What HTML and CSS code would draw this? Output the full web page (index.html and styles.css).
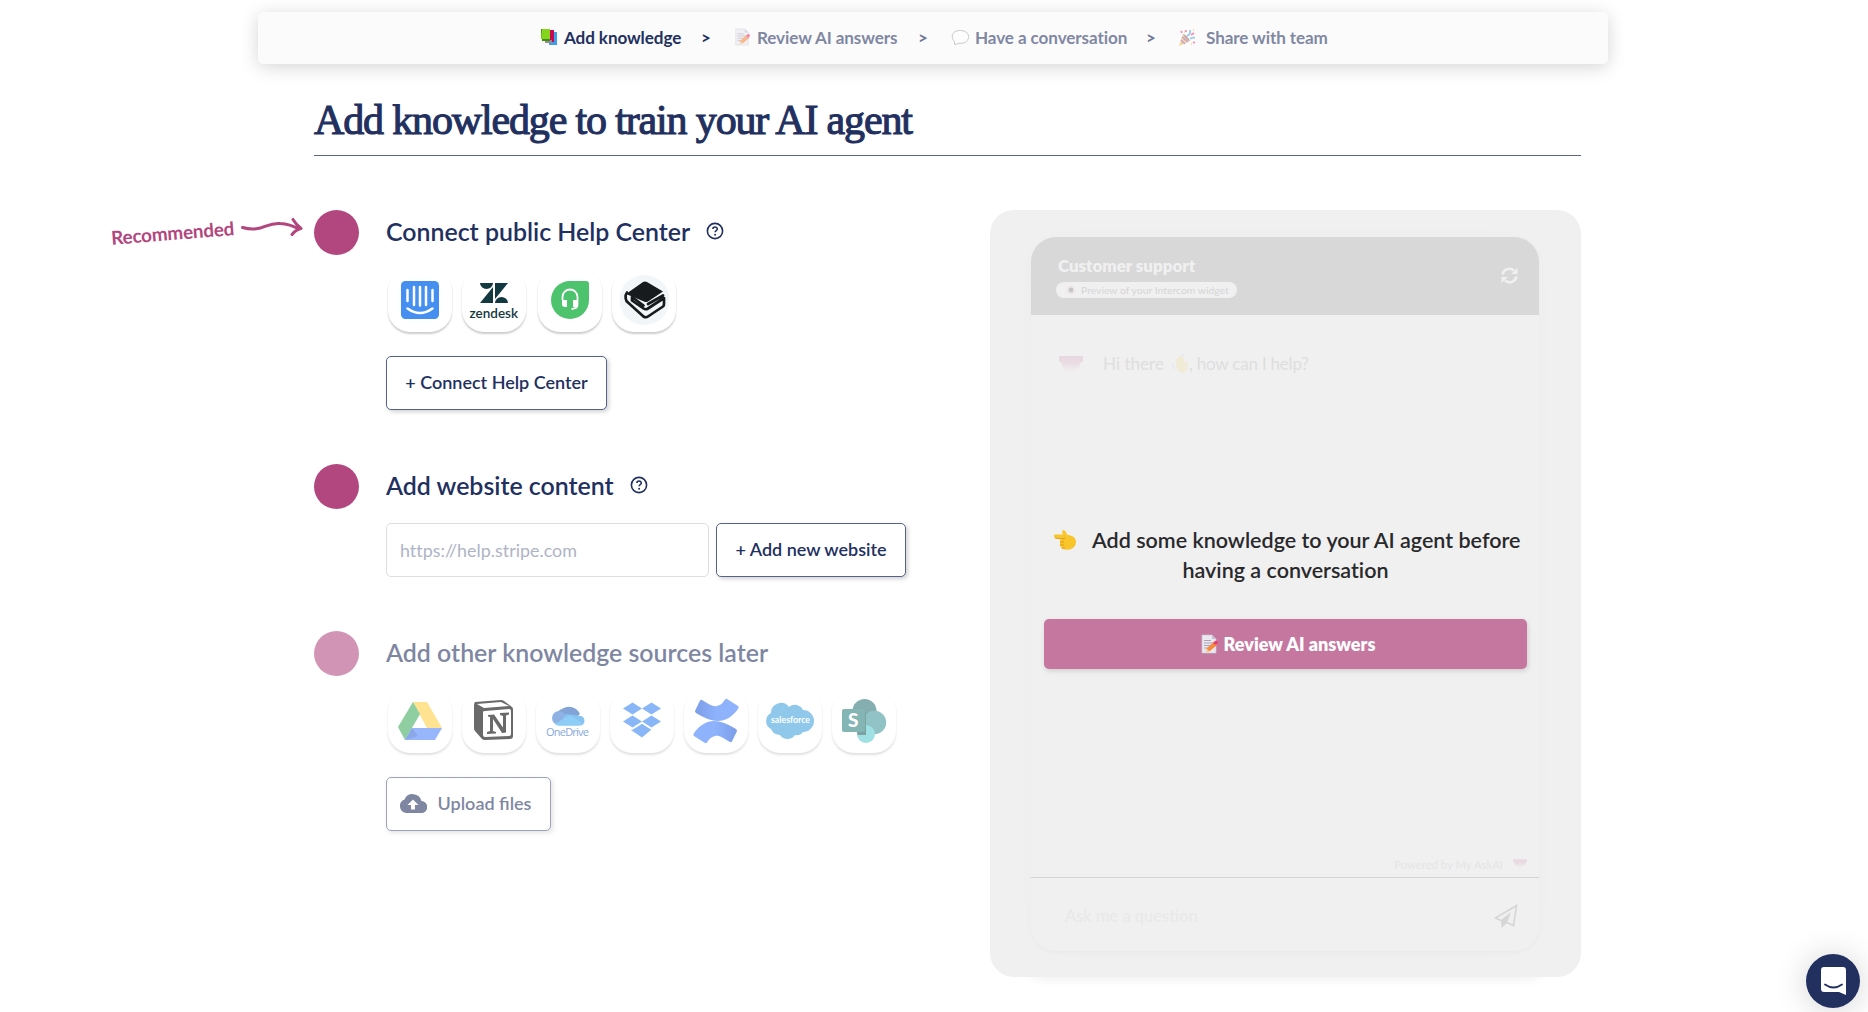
FILE: index.html
```html
<!DOCTYPE html>
<html lang="en">
<head>
<meta charset="utf-8">
<title>Add knowledge</title>
<link rel="stylesheet" href="styles.css">
</head>
<body>
<svg class="defs" width="0" height="0">
  <defs>
    <symbol id="memo" viewBox="0 0 17 20">
      <path d="M1 1h10l4 4v14H1z" fill="#ebe8f0" stroke="#c9c5d4" stroke-width=".7"/>
      <path d="M11 1v4h4z" fill="#c4bfd0"/>
      <path d="M3 6.500h7M3 9h9M3 11.500h7M3 14h4" stroke="#a9a4b8" stroke-width="1"/>
      <path d="M5 18l1-4 7-6 3 3-7 6z" fill="#f58a3c"/>
      <path d="M12 9l2-2q2-1 3 1 0 1-2 3z" fill="#ee3b6d"/>
      <path d="M5 18l1-3 2 2z" fill="#ffd9a8"/>
    </symbol>
    <symbol id="help" viewBox="0 0 18 18">
      <circle cx="9" cy="9" r="7.600" fill="none" stroke="#22305f" stroke-width="1.600"/>
      <path d="M6.900 7.100c0-2.700 4.400-2.700 4.400-.1 0 1.500-2.200 1.600-2.200 3.300" fill="none" stroke="#22305f" stroke-width="1.600"/>
      <circle cx="9.100" cy="12.700" r="1" fill="#22305f"/>
    </symbol>
    <linearGradient id="smile" x1="0" y1="0" x2="0" y2="1"><stop offset="0" stop-color="#e8d6df"/><stop offset=".45" stop-color="#eadde3"/><stop offset="1" stop-color="#f0f0f0"/></linearGradient>
  </defs>
</svg>

<nav class="steps">
  <div class="step step-current"><svg width="17" height="18" viewBox="0 0 17 18"><path d="M8 4h8v13H8z" fill="#3e9fe6"/><path d="M4 2h9v12H4z" fill="#c50a50"/><path d="M4 12h7v3H4z" fill="#9a8796"/><path d="M0 1h9v10H0z" fill="#86d51d"/><path d="M0 1h1v12h8v-2H1z" fill="#3e8e14"/></svg><span class="w1">Add knowledge</span></div>
  <span class="sep step-current">&gt;</span>
  <div class="step"><svg width="17" height="18"><use href="#memo"/></svg><span class="w2">Review AI answers</span></div>
  <span class="sep">&gt;</span>
  <div class="step"><svg width="18" height="17" viewBox="0 0 18 17"><path d="M3.500 12.500C-1 8 1.500 1.500 8.500 1.500h1c8 0 11 7.500 5 11.500-2 1.300-5 1.600-7 1.200Q5.500 15.500 3.500 15.500z" fill="#fff" stroke="#9a9a9a" stroke-width=".9"/></svg><span class="w3">Have a conversation</span></div>
  <span class="sep">&gt;</span>
  <div class="step step-share"><svg width="17" height="17" viewBox="0 0 17 17"><path d="M4 5l7 7-11 5z" fill="#f4b847"/><path d="M3 8l6 5M2 11l4 4" stroke="#8a5bd0" stroke-width="1.300"/><path d="M4 5q4 1 7 7-4 0-7-7" fill="#9b6b73"/><path d="M8 7q4-2 3-6M11 10q2-2 5-1" fill="none" stroke="#52a9ed" stroke-width="1.800"/><path d="M2 2l1 2M12 6l3-2M7 1v2M14 13l2 1" stroke="#eb3f8c" stroke-width="1.700"/><path d="M14 1h1M5 3h1M12 15h1" stroke="#f4b93c" stroke-width="1.500"/></svg><span class="w4">Share with team</span></div>
</nav>

<main>
  <h1><span>Add knowledge to train your AI agent</span></h1>
  <div class="columns">
    <div class="sources">
      <section class="source">
        <div class="recommended"><span>Recommended</span><svg width="62" height="22" viewBox="0 0 62 22"><path d="M1.500 9.500C21 15 25 4 39 5.500q10 .5 19 5.500M52 1.500q3 5 8 9-5 1-9 6" fill="none" stroke="#b2467e" stroke-width="3" stroke-linecap="round" stroke-linejoin="round"/></svg></div>
        <div class="dot"></div>
        <div class="content">
          <h2>Connect public Help Center <svg width="18" height="18"><use href="#help"/></svg></h2>
          <div class="tiles">
            <div class="tile"><svg viewBox="0 0 64 64"><rect x="13" y="13" width="38" height="38" rx="4.500" fill="#458ff0"/><path d="M19.500 22v11M26 19v18M32 19v18.500M38 19v18M44.500 22v11M19.500 40.500q12.500 9 25 0" fill="none" stroke="#fff" stroke-width="2.500" stroke-linecap="round"/></svg></div>
            <div class="tile"><svg viewBox="0 0 64 64"><g fill="#123840"><path d="M18 15h13a6.500 6 0 0 1-13 0zM31 19v16H18zM33 15h13L33 31zM33 35a6.500 6 0 0 1 13 0z"/></g><text x="7.500" y="49.500" textLength="48.500" lengthAdjust="spacingAndGlyphs" class="logo-text zendesk">zendesk</text></svg></div>
            <div class="tile tile-wide"><svg viewBox="0 0 64 64"><path d="M32 13h16q3 0 3 3v16a19 19 0 1 1-19-19" fill="#4cc36c"/><path d="M24.500 32v-3a7.500 7.500 0 0 1 15 0v8q0 3.500-6 4" fill="none" stroke="#fff" stroke-width="1.800"/><path d="M24 32h5v7h-2q-3 0-3-3zm11 0h5v4q0 3-3 3h-2z" fill="#fff"/></svg></div>
            <div class="tile"><svg viewBox="0 0 64 64"><circle cx="32.500" cy="32" r="25" fill="#f2f6f8"/><path d="M14 26l17-12q2-1 4 0l16 9.500L36 33.500q-2 1.200-4 0z" fill="#171b1e"/><path d="M15 24.500c-2.500 3-1.500 8.500 1 10l15.500 14q2.300 1.500 4.500 0l15-10q1-1 1-2.500v-6L36 40.500q-2.300 1.500-4.500 0L20 32.500V29l11.500 8.500M36 36l15-8.500" fill="none" stroke="#171b1e" stroke-width="2.700" stroke-linejoin="round" stroke-linecap="round"/></svg></div>
          </div>
          <button class="btn connect"><span>+ Connect Help Center</span></button>
        </div>
      </section>

      <section class="source">
        <div class="dot"></div>
        <div class="content">
          <h2>Add website content <svg width="18" height="18"><use href="#help"/></svg></h2>
          <div class="website"><input type="text" placeholder="https://help.stripe.com"><button class="btn add-site"><span>+ Add new website</span></button></div>
        </div>
      </section>

      <section class="source later">
        <div class="dot"></div>
        <div class="content">
          <h2>Add other knowledge sources later</h2>
          <div class="tiles">
            <div class="tile"><svg viewBox="0 0 64 64"><path d="M25 13h14l15 26H39z" fill="#ffd043"/><path d="M25 13l7 12-15 26-7-13z" fill="#3eab5d"/><path d="M24 39h30l-7 12H17z" fill="#4f82fa"/><path d="M24 39l6 8-13 4z" fill="#3769d9"/></svg></div>
            <div class="tile"><svg viewBox="0 0 64 64"><path d="M13 13l26-2q2 0 3 1l8 6q1 1 1 2v27q0 3-3 3l-25 1q-2 0-3-1l-7-8q-1-1-1-3V17q0-3 1-4z" fill="#000"/><path d="M15 15l24-2 8 4-25 2zM21 23q0-1 2-1l24-2q2 0 2 2v23q0 2-2 2l-24 1q-2 0-2-2z" fill="#fff"/><path d="M26 26l6-.5 9 13V27l-3-1v-2l9-.5v2l-3 1v17l-4 .5-9-14v12l3 1v1.500l-9 .5v-2l3-1V28l-2-.5z" fill="#000"/></svg></div>
            <div class="tile"><svg viewBox="0 0 64 64"><path d="M21 33a9 9 0 0 1 5-13 12 12 0 0 1 18 5l-12 10z" fill="#2861b7"/><circle cx="23" cy="29" r="7" fill="#3f7bd1"/><path d="M30 25q8 1 15 2a5 5 0 0 1 0 9.500H22z" fill="#3397e8"/><path d="M19 35l15-9 12 8q-1 2.500-4 2.500H23q-3 0-4-1.500z" fill="#3eaaf0"/><text x="10" y="46.800" textLength="43" class="logo-text onedrive">OneDrive</text></svg></div>
            <div class="tile"><svg viewBox="0 0 64 64"><path d="M22.500 13.500l9.500 6-9.500 6-9.500-6zM41.500 13.500l9.500 6-9.500 6-9.500-6zM22.500 26.500l9.500 6-9.500 6-9.500-6zM41.500 26.500l9.500 6-9.500 6-9.500-6zM32 34.500l9.500 6-9.500 8-11-7.500z" fill="#3483f1"/><path d="M21 39.500l1.500.8 9.500-6 9.500 6 1.500-.8" fill="none" stroke="#fff" stroke-width="1"/></svg></div>
            <div class="tile"><svg viewBox="0 0 64 64"><defs><linearGradient id="conf"><stop stop-color="#2058d8"/><stop offset=".5" stop-color="#3d7cfb"/></linearGradient></defs><path id="wave" d="M11 22l5-10.500q1-1 2-.5C25 15 29 18 33 17c4-1 6-3 8-6.500q1-1 2-.5l11 7q1 .5.500 2C49 28 41 32 34 32c-8 0-15-4-22-8q-1-1-1-2z" fill="url(#conf)"/><use href="#wave" transform="rotate(180 32 32)"/></svg></div>
            <div class="tile"><svg viewBox="0 0 64 64"><path transform="translate(-3 0)" d="M16 24a10 10 0 0 1 18-6 9 9 0 0 1 14 3 11 11 0 1 1 0 22q-3 4-8 3a9 9 0 0 1-15 0 10 10 0 0 1-9-6 9 9 0 0 1 0-16z" fill="#41a2e0"/><text x="13" y="33.500" textLength="39" lengthAdjust="spacingAndGlyphs" class="logo-text salesforce">salesforce</text></svg></div>
            <div class="tile"><svg viewBox="0 0 64 64"><circle cx="32.500" cy="22" r="12" fill="#2d7476"/><circle cx="42.500" cy="33.500" r="11.700" fill="#43999e"/><circle cx="34" cy="45" r="9" fill="#5acbd2"/><path d="M21 23h13v23H25.500z" fill="#235e60"/><rect x="10" y="20" width="23" height="23" rx="2" fill="#2c8080"/><text x="16" y="38" class="logo-text sharepoint">S</text></svg></div>
          </div>
          <button class="btn upload"><svg width="28" height="19" viewBox="0 0 28 19"><path fill-rule="evenodd" d="M7 19a7 7 0 0 1-1.500-13.500A9 9 0 0 1 22.500 7 6 6 0 0 1 22 19zM14 5.500L8.500 11H12v4.500h4V11h3.500z" fill="#22305f"/></svg><span>Upload files</span></button>
        </div>
      </section>
    </div>

    <aside class="preview">
      <div class="halo"></div>
      <div class="chat">
        <header>
          <div class="chat-title"><strong>Customer support</strong><div class="pill"><svg width="10" height="10" viewBox="0 0 10 10"><circle cx="5" cy="5" r="4.500" fill="#ece8ea"/><circle cx="5" cy="5" r="2.400" fill="#c5c5c5"/></svg><span>Preview of your Intercom widget</span></div></div>
          <svg width="17" height="17" viewBox="0 0 17 17"><path d="M1.500 7.500A7 7 0 0 1 13 3.500M15.500 9.500A7 7 0 0 1 4 13.500" fill="none" stroke="#f0f0f0" stroke-width="2.500"/><path d="M16.500 1v6H10zM.5 16v-6H7z" fill="#f0f0f0"/></svg>
        </header>
        <div class="messages">
          <div class="message"><svg width="24" height="18" viewBox="0 0 24 18"><path d="M1 0h22q1 0 1 1v5h-2q-2 10-10 10T2 6H0V1q0-1 1-1z" fill="url(#smile)"/></svg><span class="hi">Hi there</span><svg width="18" height="20" viewBox="0 0 18 20"><path d="M5 11L4.500 6.500q1.500-1 2.300.5L7 4q1.500-1.500 2.500 0l.5-1q1.500-1 2.300.5L13 6l.8 5L15 8.500q2-.5 2 1.500l-.5 5q-1 4.500-5 4.500-4 0-6-5z" fill="#f0ead6"/><path d="M1 11l3 5M10 1l4 1.500" stroke="#e6e7f0" stroke-width="1.500"/></svg><span class="greet">, how can I help?</span></div>
          <div class="powered"><span>Powered by My AskAI</span><svg width="14" height="10" viewBox="0 0 24 16"><path d="M0 0h24v5h-2q-2 10-10 10T2 5H0z" fill="url(#smile)"/></svg></div>
        </div>
        <footer><span>Ask me a question</span><svg width="24" height="24" viewBox="0 0 24 24"><path d="M1.500 14L22.500 1.500l-3 20-6.500-3-6-2z" fill="none" stroke="#d6d6d6" stroke-width="1.700"/><path d="M17 8l-4 11-5.500 5-.5-8z" fill="#d6d6d6"/></svg></footer>
      </div>
      <div class="prompt">
        <p><svg width="23" height="20" viewBox="0 0 23 20"><path d="M1.500 4.500q-2 3 1.500 3.500l5 1-1 2v4q1 4 5 4.500 7 .8 10-3.500 3-7-3-10L14 4.500q-1.500-5-4.500-4-1 1 .5 4z" fill="#f9c52d"/><path d="M2 8l7 1 3-1M7 12h4M7 15h4M9 18h3" fill="none" stroke="#e29b12" stroke-width="1"/></svg><span class="line1">Add some knowledge to your AI agent before</span></p>
        <p class="line2">having a conversation</p>
        <button class="review"><svg width="17" height="20"><use href="#memo"/></svg><span>Review AI answers</span></button>
      </div>
    </aside>
  </div>
</main>
<button class="launcher"><svg width="25" height="28" viewBox="0 0 25 28"><path d="M3 0h19q3 0 3 3v25l-7-3H3q-3 0-3-3V3q0-3 3-3z" fill="#fff"/><path d="M4 17.500q8.500 6 17 0" fill="none" stroke="#22305f" stroke-width="1.800" stroke-linecap="round"/></svg></button>
</body>
</html>
```
FILE: styles.css
```css
* { box-sizing: border-box; }
body { margin: 0; padding-top: 12px; height: 1012px; overflow: hidden; background: #fff; color: #22305f; font-family: Lato, sans-serif; font-variant-ligatures: none; }
svg { display: block; flex: none; }
.defs { position: absolute; }
button { font: inherit; color: inherit; margin: 0; }

.steps { width: 1350px; height: 52px; margin-left: 258px; padding: 0 0 2px 283px; display: flex; align-items: center; background: #fbfbfb; border-radius: 5px; box-shadow: 0 3px 18px rgba(0,0,0,.17); font-size: 17.100px; font-weight: 700; letter-spacing: -.1px; white-space: nowrap; }
.step { display: flex; align-items: center; gap: 6px; opacity: .57; }
.step-share { gap: 10px; }
.step.step-current, .sep.step-current { opacity: 1; }
.sep { opacity: .65; width: 10px; margin: 0 23px 0 20px; }
.w1 { width: 117px; }
.w2 { width: 141px; }
.w3 { width: 151px; }

main { width: 1267px; margin-left: 314px; }
h1 { margin: 0; height: 92px; padding-top: 31px; border-bottom: 1px solid #5b6688; font: 400 42px/50px "Liberation Serif", serif; letter-spacing: -1.150px; -webkit-text-stroke: 1.100px #22305f; white-space: nowrap; }
.columns { display: flex; justify-content: space-between; margin-top: 54px; }
.source { position: relative; display: flex; gap: 27px; margin-bottom: 54px; }
.dot { width: 45px; height: 45px; border-radius: 50%; background: #b2467e; }
h2 { margin: 0; height: 45px; padding-bottom: 3px; display: flex; align-items: center; gap: 16px; font-size: 24.900px; font-weight: 600; white-space: nowrap; }
.recommended { position: absolute; left: -203px; top: 8px; display: flex; gap: 8px; color: #b2467e; font-size: 18.900px; font-weight: 700; }
.recommended span { width: 122px; transform: rotate(-4.500deg); margin-top: 3px; letter-spacing: -.2px; }

.tiles { display: flex; gap: 10px; margin: 13px 0 24px 2px; }
.tile { width: 64px; height: 64px; border-radius: 22px; background: #fff; box-shadow: 0 2px 2px rgba(0,0,0,.2); }
.tile-wide { margin: 0 0 0 2px; }
.logo-text { font-family: Lato, sans-serif; }
.zendesk { font-size: 13px; font-weight: 600; fill: #123840; }
.onedrive { font: 11px "Open Sans", sans-serif; fill: #2869c4; }
.salesforce { font-size: 9px; font-weight: 700; fill: #fff; }
.sharepoint { font-size: 19px; font-weight: 900; fill: #fff; }

.btn { height: 54px; padding: 0 0 2px; border: 1px solid #56628b; border-radius: 5px; background: #fff; box-shadow: 2px 2px 4px rgba(0,0,0,.18); display: flex; align-items: center; justify-content: center; font-size: 18px; font-weight: 600; white-space: nowrap; }
.connect { width: 221px; }
.website { display: flex; gap: 7px; margin-top: 14px; }
.website input { width: 323px; height: 54px; border: 1px solid #dcdee6; border-radius: 5px; padding: 0 13px; font: 400 17.900px Lato, sans-serif; font-variant-ligatures: none; }
.website input::placeholder { color: #afb4c5; }
.add-site { width: 190px; }
.later > .dot, .later h2, .later .tile, .later .btn { opacity: .58; }
.upload { width: 165px; gap: 11px; padding-right: 7px; font-variant-ligatures: normal; }

.preview { position: relative; width: 591px; height: 767px; padding: 27px 42px 26px 41px; border-radius: 24px; background: #f0f0f0; }
.halo { position: absolute; inset: 0 32px; border-radius: 24px; box-shadow: 0 5px 8px -1px rgba(0,0,0,.05); clip-path: inset(100% -10px -20px -10px); }
.chat { height: 714px; border-radius: 25px; overflow: hidden; display: flex; flex-direction: column; color: #dedede; background: #f0f0f0; box-shadow: 0 2px 5px rgba(0,0,0,.018), 0 0 30px rgba(0,0,0,.01); }
.chat header { height: 78px; background: #d8d8d8; padding: 19px 21px 0 25px; display: flex; justify-content: space-between; }
.chat header > svg { margin-top: 11px; }
.chat-title strong { display: block; margin-left: 2px; color: #f0f0f0; font-size: 16.900px; font-weight: 800; line-height: 20px; }
.pill { margin-top: 6px; width: 181px; height: 16px; border-radius: 8px; background: #f0f0f0; display: flex; align-items: center; padding-left: 10px; gap: 5px; font-size: 10.400px; white-space: nowrap; color: #d5d5d5; }
.messages { height: 562px; display: flex; flex-direction: column; justify-content: space-between; padding: 36px 12px 3px 28px; }
.message { display: flex; align-items: center; font-size: 17.100px; height: 24px; white-space: nowrap; }
.message > svg:first-child { margin-top: 4px; }
.hi { margin: 0 7px 0 20px; }
.greet { letter-spacing: -.25px; }
.powered { display: flex; align-items: center; justify-content: flex-end; gap: 10px; font-size: 11.300px; height: 20px; color: #e5e5e5; }
.chat footer { flex: 1; border-top: 1px solid #d4d4d4; display: flex; justify-content: space-between; padding: 26px 21px 0 34px; font-size: 16.500px; line-height: 24px; color: #e8e8e8; }
.prompt { position: absolute; left: 54px; top: 315px; width: 483px; color: #29292b; }
.prompt p { margin: 0; padding-left: 9px; height: 30px; display: flex; align-items: center; gap: 16px; font-size: 21.500px; font-weight: 600; white-space: nowrap; }
.prompt .line2 { justify-content: center; padding: 0; }
.review { width: 483px; height: 50px; margin-top: 34px; padding: 0 0 1px 5px; border: 0; border-radius: 5px; background: #c577a0; color: #fff; display: flex; align-items: center; justify-content: center; gap: 6px; font-size: 18px; font-weight: 800; box-shadow: 1px 2px 5px rgba(0,0,0,.14); }
.launcher { position: absolute; left: 1806px; top: 954px; width: 54px; height: 54px; padding: 0 0 0 1px; border: 0; border-radius: 50%; background: #223060; display: flex; align-items: center; justify-content: center; box-shadow: 0 2px 32px rgba(0,0,0,.18); }
```
